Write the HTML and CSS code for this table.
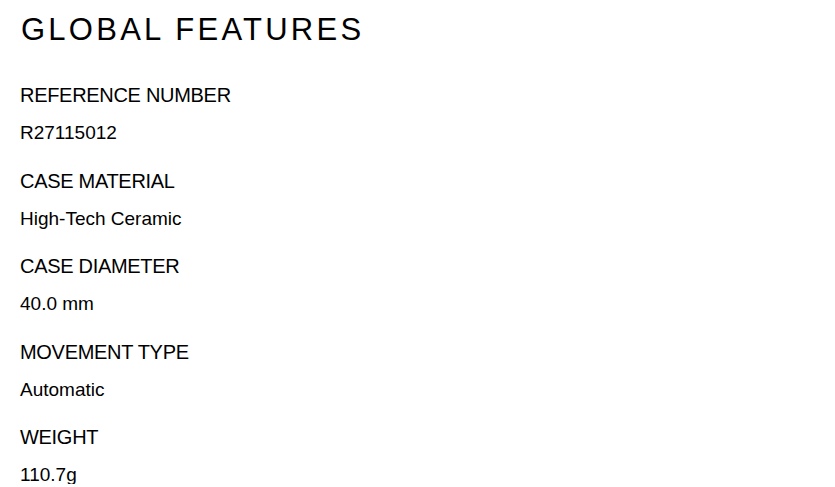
FILE: index.html
```html
<!DOCTYPE html>
<html>
<head>
<meta charset="utf-8">
<link rel="stylesheet" href="styles.css">
</head>
<body>
<section class="features">
  <h1 class="title">GLOBAL FEATURES</h1>
  <dl class="list">
    <div class="item"><dt class="label">REFERENCE NUMBER</dt><dd class="value">R27115012</dd></div>
    <div class="item"><dt class="label">CASE MATERIAL</dt><dd class="value">High-Tech Ceramic</dd></div>
    <div class="item"><dt class="label">CASE DIAMETER</dt><dd class="value">40.0 mm</dd></div>
    <div class="item"><dt class="label">MOVEMENT TYPE</dt><dd class="value">Automatic</dd></div>
    <div class="item"><dt class="label">WEIGHT</dt><dd class="value">110.7g</dd></div>
  </dl>
</section>
</body>
</html>
```
FILE: styles.css
```css
html, body {
  margin: 0;
  padding: 0;
  background: #ffffff;
  color: #000000;
  font-family: "Liberation Sans", Arial, sans-serif;
}
.features {
  padding: 12px 20px 0 20px;
}
.title {
  margin: 0 0 0 1px;
  font-size: 31px;
  font-weight: normal;
  letter-spacing: 3.25px;
  line-height: 36px;
}
.list {
  margin: 37px 0 0 0;
  padding: 0;
  display: flex;
  flex-direction: column;
  gap: 28.5px;
}
.item {
  display: flex;
  flex-direction: column;
  gap: 18px;
}
.label {
  margin: 0;
  font-size: 20px;
  letter-spacing: -0.3px;
  line-height: 20px;
}
.value {
  margin: 0;
  font-size: 19px;
  letter-spacing: 0;
  line-height: 19px;
}
```
